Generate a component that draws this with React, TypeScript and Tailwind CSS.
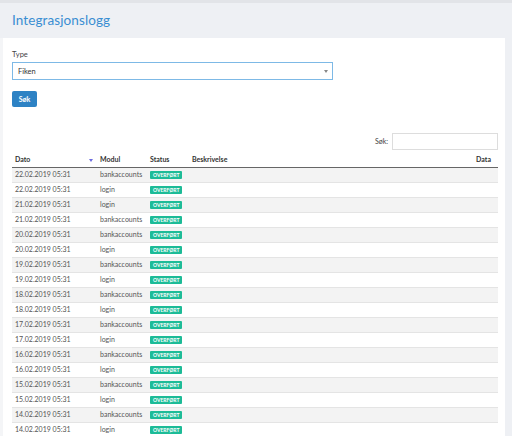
const rows = [
  ["22.02.2019 05:31", "bankaccounts"],
  ["22.02.2019 05:31", "login"],
  ["21.02.2019 05:31", "login"],
  ["21.02.2019 05:31", "bankaccounts"],
  ["20.02.2019 05:31", "bankaccounts"],
  ["20.02.2019 05:31", "login"],
  ["19.02.2019 05:31", "bankaccounts"],
  ["19.02.2019 05:31", "login"],
  ["18.02.2019 05:31", "bankaccounts"],
  ["18.02.2019 05:31", "login"],
  ["17.02.2019 05:31", "bankaccounts"],
  ["17.02.2019 05:31", "login"],
  ["16.02.2019 05:31", "bankaccounts"],
  ["16.02.2019 05:31", "login"],
  ["15.02.2019 05:31", "bankaccounts"],
  ["15.02.2019 05:31", "login"],
  ["14.02.2019 05:31", "bankaccounts"],
  ["14.02.2019 05:31", "login"],
];

export default function App() {
  return (
    <div
      className="w-[512px] h-[436px] overflow-hidden bg-[#eef0f4] text-[#555]"
      style={{ fontFamily: "Lato, 'Open Sans', sans-serif" }}
    >
      <div className="h-[3px] bg-[#e2e4e8]" />
      {/* Page title */}
      <div className="h-[35px] px-3 flex items-center">
        <h1 className="text-[13.5px] text-[#3a8ed2] tracking-[0.1px]">Integrasjonslogg</h1>
      </div>

      <div className="flex h-full">
        <div className="w-[3px] bg-[#f4f5f7]" />
        <div className="w-[502px] bg-white pl-[9px] pr-[7px] pt-[11px]">
          {/* Filter form */}
          <label className="block text-[7.5px] mb-[2px] text-[#444]">Type</label>
          <div className="w-[321px] h-[18px] border border-[#7db9e6] flex items-center justify-between pl-[5px] pr-[4px] text-[7.5px] text-[#333]">
            <span>Fiken</span>
            <span className="w-0 h-0 border-l-[2.5px] border-r-[2.5px] border-t-[3px] border-l-transparent border-r-transparent border-t-[#888]" />
          </div>
          <button className="mt-[11px] w-[25px] h-[16px] rounded-[2px] bg-[#2d82c4] text-white text-[7px] font-bold">
            Søk
          </button>

          {/* Search */}
          <div className="mt-[25px] flex justify-end items-center gap-[4px]">
            <span className="text-[7px] text-[#444]">Søk:</span>
            <div className="w-[106px] h-[17px] border border-[#ddd]" />
          </div>

          {/* Table */}
          <table className="mt-[2px] w-[486px] border-collapse text-[7px]">
            <thead>
              <tr className="h-[15px] border-b-[1.5px] border-[#666] font-bold text-[#333] text-left">
                <th className="pl-[3px] w-[88px] relative">
                  Dato
                  <span className="absolute right-[7px] top-[7px] w-0 h-0 border-l-[2.5px] border-r-[2.5px] border-t-[3px] border-l-transparent border-r-transparent border-t-[#6c6ce0]" />
                </th>
                <th className="w-[50px]">Modul</th>
                <th className="w-[42px]">Status</th>
                <th>Beskrivelse</th>
                <th className="text-right pr-[7px]">Data</th>
              </tr>
            </thead>
            <tbody>
              {rows.map(([date, mod], i) => (
                <tr
                  key={i}
                  className={`h-[15px] border-b border-[#e4e4e4] ${i % 2 === 0 ? "bg-[#f3f3f3]" : "bg-white"}`}
                >
                  <td className="pl-[3px]">{date}</td>
                  <td>{mod}</td>
                  <td>
                    <span className="inline-block px-[3px] h-[8px] leading-[8px] rounded-[1px] bg-[#1dbb97] text-white text-[5px] font-bold">
                      OVERFØRT
                    </span>
                  </td>
                  <td />
                  <td />
                </tr>
              ))}
            </tbody>
          </table>
        </div>
        <div className="flex-1" />
      </div>
    </div>
  );
}
